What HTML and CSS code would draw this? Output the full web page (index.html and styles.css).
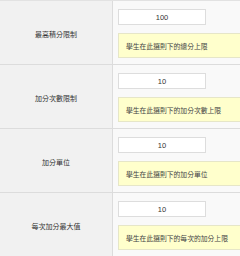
FILE: index.html
```html
<!DOCTYPE html>
<html lang="zh-Hant">
<head>
    <meta charset="UTF-8">
    <meta name="viewport" content="width=device-width, initial-scale=1.0">
    <title>加分設定</title>
    <link rel="stylesheet" href="styles.css">
</head>
<body>
    <div class="settings">
        <div class="row">
            <div class="label">最高積分限制</div>
            <div class="field">
                <input class="value" type="text" value="100">
                <div class="hint">學生在此選則下的總分上限</div>
            </div>
        </div>
        <div class="row">
            <div class="label">加分次數限制</div>
            <div class="field">
                <input class="value" type="text" value="10">
                <div class="hint">學生在此選則下的加分次數上限</div>
            </div>
        </div>
        <div class="row">
            <div class="label">加分單位</div>
            <div class="field">
                <input class="value" type="text" value="10">
                <div class="hint">學生在此選則下的加分單位</div>
            </div>
        </div>
        <div class="row">
            <div class="label">每次加分最大值</div>
            <div class="field">
                <input class="value" type="text" value="10">
                <div class="hint">學生在此選則下的每次的加分上限</div>
            </div>
        </div>
    </div>
</body>
</html>
```

FILE: styles.css
```css
/* tabla de configuración */
body {
    font-family: "Liberation Sans", "Noto Sans CJK TC", sans-serif;
    background-color: #f9f9f9;
    margin: 0;
    padding: 0;
    color: #444;
}

.settings {
    border-top: 1px solid #e2e2e2;
}

.row {
    display: grid;
    grid-template-columns: 113px 1fr;
    border-bottom: 1px solid #dcdcdc;
}

.label {
    background-color: #f1f1f1;
    border-right: 1px solid #dcdcdc;
    display: flex;
    align-items: center;
    justify-content: center;
    padding-top: 2px;
    font-size: 7px;
    color: #333;
}

.field {
    display: flex;
    flex-direction: column;
    gap: 8px;
    padding: 8px 0 6px 5px;
}

.value {
    width: 88px;
    height: 16px;
    box-sizing: border-box;
    border: 1px solid #dddddd;
    background-color: white;
    text-align: center;
    font-family: "Liberation Sans", sans-serif;
    font-size: 7.5px;
    color: #333;
    padding: 0;
    margin: 0;
}

.hint {
    height: 25px;
    box-sizing: border-box;
    background-color: #ffffcc;
    border: 1px solid #e6e6c8;
    border-right: none;
    display: flex;
    align-items: center;
    padding-left: 7px;
    font-size: 6.8px;
    color: #444;
}
```
